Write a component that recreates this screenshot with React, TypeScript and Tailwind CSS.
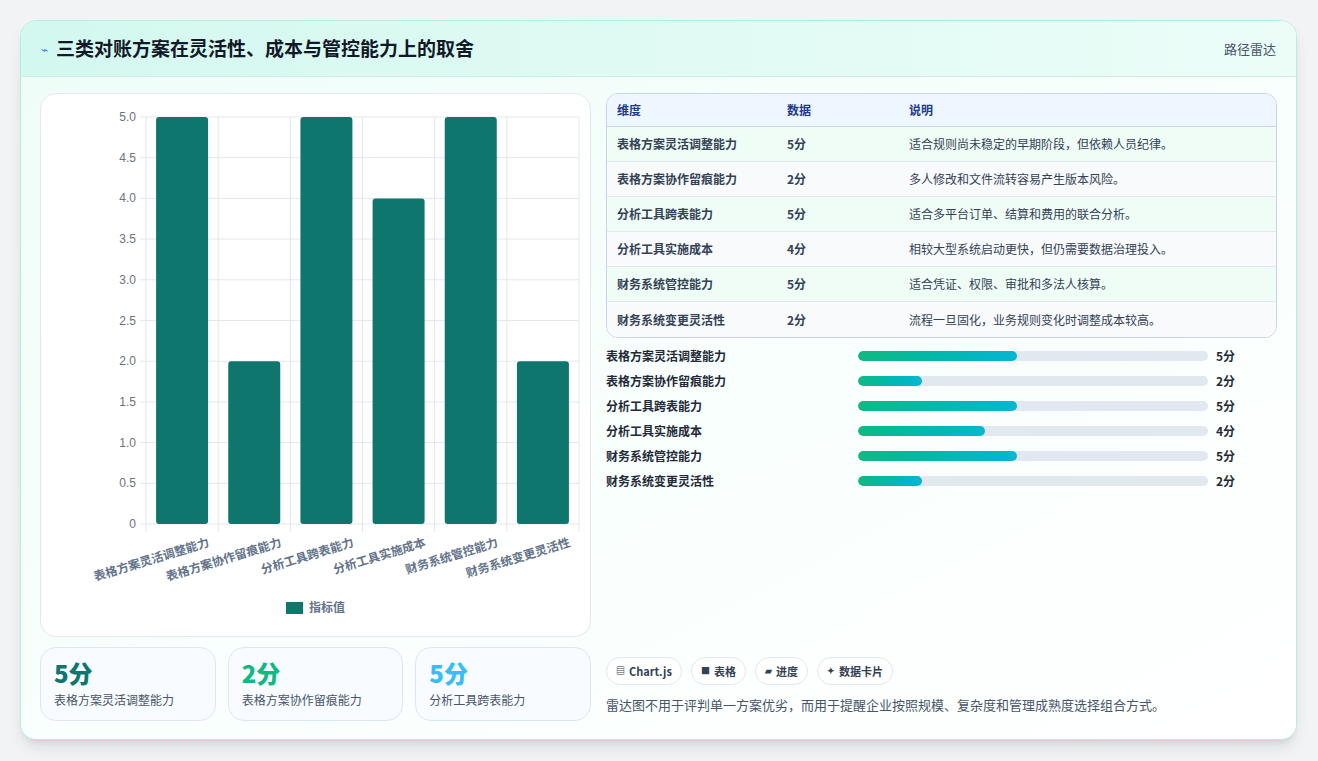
import React from "react";

const rows = [
  ["表格方案灵活调整能力", 5, "适合规则尚未稳定的早期阶段，但依赖人员纪律。"],
  ["表格方案协作留痕能力", 2, "多人修改和文件流转容易产生版本风险。"],
  ["分析工具跨表能力", 5, "适合多平台订单、结算和费用的联合分析。"],
  ["分析工具实施成本", 4, "相较大型系统启动更快，但仍需要数据治理投入。"],
  ["财务系统管控能力", 5, "适合凭证、权限、审批和多法人核算。"],
  ["财务系统变更灵活性", 2, "流程一旦固化，业务规则变化时调整成本较高。"],
] as const;

function Chart() {
  const x0 = 105, x1 = 538, y0 = 23, yB = 430;
  const step = (x1 - x0) / 6;
  const ticks = [0, 0.5, 1, 1.5, 2, 2.5, 3, 3.5, 4, 4.5, 5];
  const y = (v: number) => yB - (v / 5) * (yB - y0);
  return (
    <svg width="550" height="543" className="block" style={{ fontFamily: "'Liberation Sans','Noto Sans CJK SC',sans-serif" }}>
      {ticks.map((t) => (
        <g key={t}>
          <line x1={x0 - 6} x2={x1} y1={y(t)} y2={y(t)} stroke="#e5e7eb" />
          <text x={x0 - 10} y={y(t) + 4} textAnchor="end" fontSize="12" fill="#6b7280">
            {t === 0 ? "0" : t.toFixed(1)}
          </text>
        </g>
      ))}
      {Array.from({ length: 7 }).map((_, i) => (
        <line key={i} x1={x0 + i * step} x2={x0 + i * step} y1={y0} y2={yB + 8} stroke="#e5e7eb" />
      ))}
      {rows.map((r, i) => {
        const cx = x0 + step * i + step / 2;
        return (
          <g key={i}>
            <rect x={cx - 26} y={y(r[1])} width="52" height={yB - y(r[1])} rx="3" fill="#0f766e" />
            <text
              x={cx + 28}
              y={yB + 22}
              textAnchor="end"
              fontSize="12"
              fontWeight="bold"
              fill="#64748b"
              transform={`rotate(-17 ${cx + 28} ${yB + 22})`}
            >
              {r[0]}
            </text>
          </g>
        );
      })}
      <rect x="245" y="508" width="17" height="12" fill="#0f766e" />
      <text x="268" y="518" fontSize="12" fill="#64748b" fontWeight="bold">指标值</text>
    </svg>
  );
}

export default function App() {
  const chips = [
    ["▤", "Chart.js"],
    ["■", "表格"],
    ["▰", "进度"],
    ["✦", "数据卡片"],
  ];
  return (
    <div
      className="w-[1318px] h-[761px] bg-[#f1f3f4] pt-5 px-5"
      style={{ fontFamily: "'Noto Sans CJK SC','Noto Sans',sans-serif" }}
    >
      <div className="w-[1277px] h-[720px] rounded-2xl border border-[#b6ece2] bg-white overflow-hidden shadow-lg flex flex-col">
        <div className="h-[56px] flex items-center justify-between px-5 bg-gradient-to-r from-[#d3f8ef] to-[#ecfdf8] border-b border-[#cdeee6]">
          <div className="flex items-center gap-2">
            <span className="text-[#3b82f6] text-xs">⌁</span>
            <span className="text-[19px] font-bold text-[#111827]">三类对账方案在灵活性、成本与管控能力上的取舍</span>
          </div>
          <span className="text-[13px] text-[#475569]">路径雷达</span>
        </div>
        <div className="flex-1 flex gap-[15px] px-[19px] pt-4 bg-gradient-to-br from-[#effdf8] via-[#f8fffc] to-white">
          <div className="w-[551px] flex flex-col gap-[10px]">
            <div className="h-[544px] rounded-2xl border border-[#e2e8f0] bg-white overflow-hidden">
              <Chart />
            </div>
            <div className="flex gap-3">
              {[
                ["5分", "表格方案灵活调整能力", "text-[#0f766e]"],
                ["2分", "表格方案协作留痕能力", "text-[#10b981]"],
                ["5分", "分析工具跨表能力", "text-[#38bdf8]"],
              ].map(([v, l, c], i) => (
                <div key={i} className="flex-1 h-[74px] rounded-2xl border border-[#dbe7f3] bg-[#f8fbff] px-[13px] pt-[9px]">
                  <div className={`text-[24px] font-extrabold leading-8 ${c}`}>{v}</div>
                  <div className="text-[12px] text-[#475569] mt-[2px]">{l}</div>
                </div>
              ))}
            </div>
          </div>
          <div className="flex-1 flex flex-col">
            <div className="rounded-xl border border-[#cbd5e1] overflow-hidden text-[12px]">
              <div className="grid grid-cols-[170px_122px_1fr] h-[33px] items-center bg-[#eef6ff] text-[#1e3a8a] font-semibold px-[10px] border-b border-[#cbd5e1]">
                <span>维度</span><span>数据</span><span>说明</span>
              </div>
              {rows.map((r, i) => (
                <div
                  key={i}
                  className={`grid grid-cols-[170px_122px_1fr] h-[35px] items-center px-[10px] text-[#334155] ${i < 5 ? "border-b border-[#e2e8f0]" : ""} ${i % 2 === 0 ? "bg-[#effdf6]" : "bg-[#f8fafc]"}`}
                >
                  <span className="font-semibold">{r[0]}</span>
                  <span className="font-semibold">{r[1]}分</span>
                  <span>{r[2]}</span>
                </div>
              ))}
            </div>
            <div className="mt-[10px] flex flex-col gap-[9px]">
              {rows.map((r, i) => (
                <div key={i} className="flex items-center h-4 text-[12px]">
                  <span className="w-[252px] font-semibold text-[#1f2937]">{r[0]}</span>
                  <div className="w-[350px] h-[10px] rounded-full bg-[#e2e8f0] overflow-hidden">
                    <div className="h-full rounded-full bg-gradient-to-r from-[#10b981] to-[#06b6d4]" style={{ width: `${(r[1] / 11) * 100}%` }} />
                  </div>
                  <span className="ml-2 font-bold text-[#1f2937]">{r[1]}分</span>
                </div>
              ))}
            </div>
            <div className="mt-[168px] flex gap-[9px]">
              {chips.map(([ic, t]) => (
                <span key={t} className="h-[28px] flex items-center gap-1 px-[9px] rounded-full border border-[#e2e8f0] bg-white text-[11px] font-semibold text-[#334155]">
                  <span className="text-[9px]">{ic}</span>{t}
                </span>
              ))}
            </div>
            <p className="mt-[10px] text-[13px] text-[#475569]">雷达图不用于评判单一方案优劣，而用于提醒企业按照规模、复杂度和管理成熟度选择组合方式。</p>
          </div>
        </div>
      </div>
    </div>
  );
}
